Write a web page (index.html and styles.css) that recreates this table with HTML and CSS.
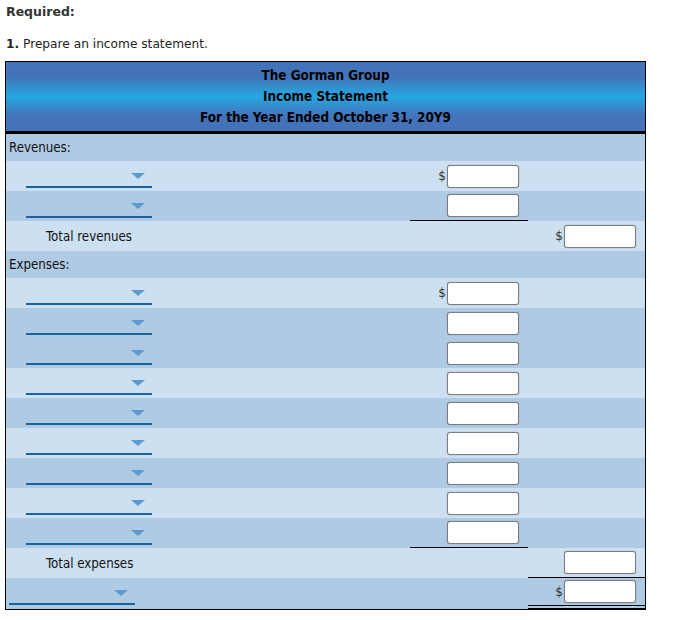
FILE: index.html
```html
<!DOCTYPE html>
<html>
<head>
<meta charset="utf-8">
<link rel="stylesheet" href="styles.css">
</head>
<body>
<div class="page">
  <div class="req">Required:</div>
  <div class="task"><b>1.</b> Prepare an income statement.</div>
  <div class="stmt">
    <div class="hdr">
      <div>The Gorman Group</div>
      <div>Income Statement</div>
      <div>For the Year Ended October 31, 20Y9</div>
    </div>
    <div class="row sec dark"><div class="lbl">Revenues:</div><div></div><div></div></div>
    <div class="row light"><div class="lbl"><span class="dd"><i></i></span></div><div class="amt"><span class="cur">$</span><span class="box"></span></div><div class="amt"></div></div>
    <div class="row dark"><div class="lbl"><span class="dd"><i></i></span></div><div class="amt ul"><span class="box"></span></div><div class="amt"></div></div>
    <div class="row light"><div class="lbl ind">Total revenues</div><div class="amt"></div><div class="amt"><span class="cur">$</span><span class="box"></span></div></div>
    <div class="row sec dark"><div class="lbl">Expenses:</div><div></div><div></div></div>
    <div class="row light"><div class="lbl"><span class="dd"><i></i></span></div><div class="amt"><span class="cur">$</span><span class="box"></span></div><div class="amt"></div></div>
    <div class="row dark"><div class="lbl"><span class="dd"><i></i></span></div><div class="amt"><span class="box"></span></div><div class="amt"></div></div>
    <div class="row dark"><div class="lbl"><span class="dd"><i></i></span></div><div class="amt"><span class="box"></span></div><div class="amt"></div></div>
    <div class="row light"><div class="lbl"><span class="dd"><i></i></span></div><div class="amt"><span class="box"></span></div><div class="amt"></div></div>
    <div class="row dark"><div class="lbl"><span class="dd"><i></i></span></div><div class="amt"><span class="box"></span></div><div class="amt"></div></div>
    <div class="row light"><div class="lbl"><span class="dd"><i></i></span></div><div class="amt"><span class="box"></span></div><div class="amt"></div></div>
    <div class="row dark"><div class="lbl"><span class="dd"><i></i></span></div><div class="amt"><span class="box"></span></div><div class="amt"></div></div>
    <div class="row light"><div class="lbl"><span class="dd"><i></i></span></div><div class="amt"><span class="box"></span></div><div class="amt"></div></div>
    <div class="row dark"><div class="lbl"><span class="dd"><i></i></span></div><div class="amt ul"><span class="box"></span></div><div class="amt"></div></div>
    <div class="row light"><div class="lbl ind">Total expenses</div><div class="amt"></div><div class="amt ul"><span class="box"></span></div></div>
    <div class="row dark last"><div class="lbl first"><span class="dd"><i></i></span></div><div class="amt"></div><div class="amt dbl"><span class="cur">$</span><span class="box"></span></div></div>
  </div>
</div>
</body>
</html>
```
FILE: styles.css
```css
html, body {
  margin: 0;
  padding: 0;
  background: #fff;
}
.page {
  padding: 4px 0 0 6px;
  font-family: "DejaVu Sans", Verdana, sans-serif;
  font-size: 12.2px;
  color: #222;
}
.req {
  font-weight: bold;
  font-size: 12.5px;
  line-height: 16px;
  color: #333;
}
.task {
  margin-top: 16px;
  line-height: 16px;
  color: #222;
}
.stmt {
  margin: 9px 0 0 -1px;
  width: 641px;
  box-sizing: border-box;
  border: 1px solid #000;
  font-family: "DejaVu Sans Condensed", Tahoma, sans-serif;
  font-size: 13.2px;
  color: #111;
}
.hdr {
  background: linear-gradient(#4272b9 0%, #4374ba 22%, #26a7e1 50%, #4374ba 78%, #4272b9 100%);
  border-bottom: 3px solid #000;
  padding: 3px 0 3px;
  text-align: center;
  font-weight: bold;
  font-size: 13.4px;
  line-height: 21px;
  color: #000;
}
.row {
  display: grid;
  grid-template-columns: 404px 118px 117px;
  height: 30px;
}
.row.sec { height: 27px; }
.dark { background: #afcbe4; }
.light { background: #cde0f1; }
.lbl {
  display: flex;
  align-items: flex-start;
  padding-left: 20px;
}
.sec .lbl {
  align-items: center;
  padding-left: 3px;
}
.lbl.ind {
  align-items: center;
  padding-left: 40px;
}
.lbl.first { padding-left: 3px; }
.dd {
  box-sizing: border-box;
  display: flex;
  justify-content: flex-end;
  align-items: flex-start;
  width: 126px;
  height: 19px;
  margin-top: 8px;
  padding: 4px 7px 0 0;
  border-bottom: 2px solid #1a62a0;
}
.dd i {
  width: 0;
  height: 0;
  border-left: 7px solid transparent;
  border-right: 7px solid transparent;
  border-top: 6px solid #5b9bd1;
}
.amt {
  box-sizing: border-box;
  display: flex;
  justify-content: flex-end;
  align-items: center;
  padding-right: 9px;
}
.amt.ul { border-bottom: 1px solid #000; }
.amt.dbl { border-bottom: 4px double #000; }
.last { height: 31px; }
.cur {
  font-family: "DejaVu Sans", sans-serif;
  font-size: 12px;
  color: #333;
  margin-right: 1px;
}
.box {
  box-sizing: border-box;
  width: 72px;
  height: 23px;
  background: #fff;
  border: 1px solid #7d7d7d;
  border-radius: 3px;
  box-shadow: 0 0 1px rgba(0,0,0,0.45);
}
```
